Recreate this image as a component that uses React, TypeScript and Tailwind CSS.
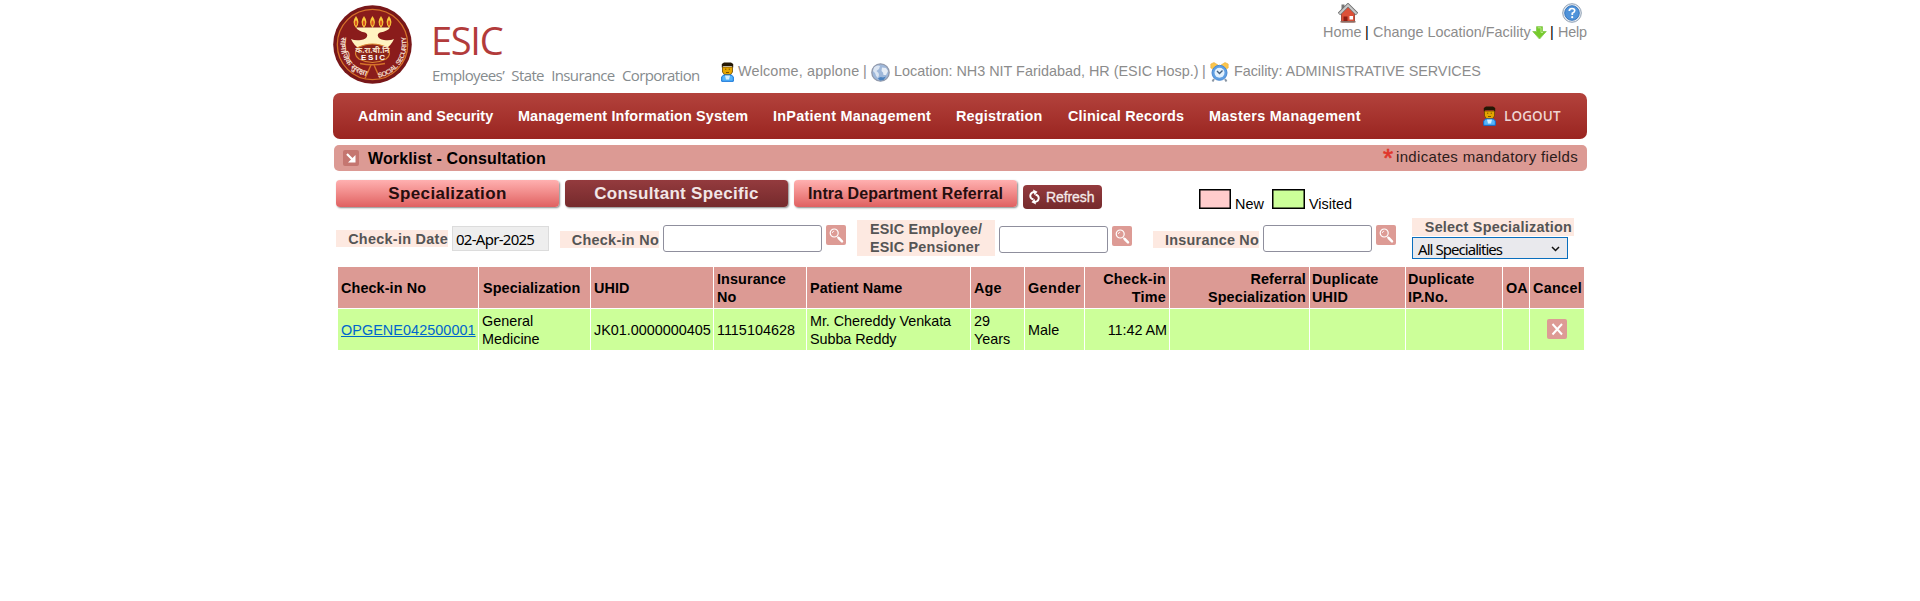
import React from "react";

function Emblem() {
  return (
    <svg className="h-[79px] w-[79px] shrink-0" viewBox="0 0 79 79">
      <defs>
        <path id="socialArc" d="M45.500 72.800 A34 34 0 0 0 73 33" />
        <path id="hindiArc" d="M8.500 32 A32 32 0 0 0 33.500 71" />
      </defs>
      <circle cx="39.500" cy="39.500" r="39.300" fill="#781719" />
      <circle cx="39.500" cy="39.500" r="35.200" fill="#8a1c1b" stroke="#d5722a" strokeWidth="1.300" />
      {[23, 31, 39.5, 48, 56].map((x) => (
        <g key={x}>
          <path d={`M${x} 11 q5 6.500 0 12 q-5 -5.500 0 -12`} fill="#f9c93c" />
          <ellipse cx={x} cy="18" rx="1.200" ry="2.800" fill="#d9541e" />
        </g>
      ))}
      <path d="M23 22.500 H57 Q55 26 47 27.500 Q44 29 45 31.500 Q46 34 51 35 Q57 36 61 34 Q58 41 52 44 H27 Q21 41 18 34 Q22 36 28 35 Q33 34 34 31.500 Q35 29 32 27.500 Q25 26 23 22.500Z" fill="#fff3c0" />
      <path d="M24 43 Q39.500 35 55 43 Q59 50 53 54 Q39.500 61 26 54 Q20 50 24 43Z" fill="#8b2418" stroke="#d98432" strokeWidth="1.200" />
      <text x="39.500" y="47.500" textAnchor="middle" fontSize="8" fontWeight="700" fill="#f4dfc6" fontFamily="Noto Sans, sans-serif">क.रा.बी.नि</text>
      <text x="28" y="55" fontSize="8" fontWeight="700" fill="#fff" textLength="24" fontFamily="Liberation Sans, sans-serif">ESIC</text>
      <path d="M27 58.500 Q39.500 61 52 58.500 M38 60 L32 73.500 M41 60 L47 73.500" stroke="#d5722a" strokeWidth="1.400" fill="none" />
      <text fontSize="7" fontWeight="700" fill="#efd6c4" fontFamily="Liberation Sans, sans-serif" letterSpacing="-0.600">
        <textPath href="#socialArc">SOCIAL SECURITY</textPath>
      </text>
      <text fontSize="8" fontWeight="700" fill="#efd6c4" fontFamily="Noto Sans, sans-serif">
        <textPath href="#hindiArc">सामाजिक सुरक्षा</textPath>
      </text>
    </svg>
  );
}

function UserIcon() {
  return (
    <svg className="h-5 w-[13px] shrink-0" viewBox="0 0 13 20">
      <path d="M1.500 5 V10 L3.500 12.700 H9.500 L11.500 10 V5Z" fill="#e5a500" stroke="#6b4700" strokeWidth=".8" />
      <path d="M.8 2 L3 .4 H10 L12.200 2 V5.500 L10.500 4 H2.500 L.8 5.500Z" fill="#231704" />
      <path d="M4 7.200 h1.300 M7.700 7.200 h1.300 M5 10.500 h3" stroke="#7a5200" strokeWidth="1" />
      <path d="M.7 19.300 V15 L2.500 13 H10.500 L12.300 15 V19.300Z" fill="#55b4fb" stroke="#0a6fd6" />
      <path d="M4 13.500 H9 L8 17.500 H5Z" fill="#d5efff" />
    </svg>
  );
}

function GlobeIcon() {
  return (
    <svg className="h-[19px] w-[19px] shrink-0" viewBox="0 0 19 19">
      <circle cx="9.500" cy="9.500" r="8.700" fill="#9fb8da" stroke="#9299aa" strokeWidth="1.300" />
      <path d="M3 4.500 Q6 1.500 9 3 L8 6 L5.500 8 L7.500 10 L8 12 L7 15 Q4.500 13 4 10 L2 8Z" fill="#dbe5f2" />
      <path d="M11 4.500 L15 5 L17 8 L15 12 L12.500 12 L12 9.500 L10.500 8Z" fill="#e6edf6" />
      <path d="M7 15.500 Q9 13 12 14.500 L15 13.500 L12.500 17 L9 17.500Z" fill="#4a82bf" />
    </svg>
  );
}

function ClockIcon() {
  return (
    <svg className="h-5 w-[19px] shrink-0" viewBox="0 0 19 20">
      <path d="M.8 6 V2 L4 .5 L8 3 L3 7Z M18.200 6 V2 L15 .5 L11 3 L16 7Z" fill="#fbc54c" stroke="#eeb13c" strokeWidth=".6" />
      <path d="M4 17 L2.500 19.500 M15 17 L16.500 19.500" stroke="#8b96a3" strokeWidth="2" />
      <circle cx="9.500" cy="10.800" r="7.500" fill="#5f9fe2" stroke="#4888d2" />
      <circle cx="9.500" cy="10.800" r="5" fill="#e3f1fd" />
      <path d="M7 9 L9.500 11.500 L12.500 8.500" stroke="#44617f" strokeWidth="1.400" fill="none" />
    </svg>
  );
}

function HouseIcon() {
  return (
    <svg className="h-5 w-5 shrink-0" viewBox="0 0 20 20">
      <rect x="3.500" y="1.500" width="3" height="7" fill="#777" />
      <path d="M3.500 10 L10 4 L16.500 10 V19 H3.500Z" fill="#dc5139" stroke="#8e3527" strokeWidth=".8" />
      <path d="M5.500 13.500 h4 V19 H5.500Z" fill="#8e1d13" />
      <rect x="11.500" y="13" width="3.500" height="3.500" fill="#fff" />
      <path d="M1 11 L10 2 L19 11" stroke="#6d6d6d" strokeWidth="3.400" fill="none" />
      <path d="M1.500 10.700 L10 2.200 L18.500 10.700" stroke="#c8c8c8" strokeWidth="2" fill="none" />
      <rect x="2.500" y="18" width="15" height="1.500" fill="#8e6f66" />
    </svg>
  );
}

function HelpIcon() {
  return (
    <svg className="h-5 w-5 shrink-0" viewBox="0 0 20 20">
      <circle cx="10" cy="10" r="9.300" fill="#e5eaf0" stroke="#8fa0b4" strokeWidth="1" />
      <circle cx="10" cy="10" r="7.300" fill="#4f93da" stroke="#2f6fb9" strokeWidth=".9" />
      <path d="M7.300 8 Q7.300 5.500 10 5.500 Q12.800 5.500 12.700 7.800 Q12.600 9.300 10.300 10.300 V12" stroke="#fff" strokeWidth="1.700" fill="none" />
      <circle cx="10.200" cy="14.200" r="1.100" fill="#fff" />
    </svg>
  );
}

function DownIcon() {
  return (
    <svg className="h-[14px] w-[15px] shrink-0" viewBox="0 0 15 14">
      <path d="M4.500 .7 H10.500 V5.500 H14.200 L7.500 13 L.8 5.500 H4.500Z" fill="#76cb2c" stroke="#8fce5c" strokeWidth="1" />
      <path d="M5.800 1.800 H9 V6.500 H11" stroke="#b7e88a" fill="none" />
    </svg>
  );
}

function SearchButton() {
  return (
    <button className="block h-5 w-5 shrink-0 rounded-[2px] bg-[#dd9b95]">
      <svg className="h-5 w-5" viewBox="0 0 20 20" fill="none">
        <circle cx="8.200" cy="8" r="4" stroke="#fff" strokeWidth="1.200" />
        <path d="M6.300 8 Q6.400 6.300 8.200 6.100" stroke="#fff" strokeWidth=".8" />
        <path d="M11.500 11.700 L12.500 12.700" stroke="#fff" strokeWidth="1.500" />
        <path d="M12.700 13 L16 16.300" stroke="#fff" strokeWidth="2.500" strokeLinecap="round" />
      </svg>
    </button>
  );
}

const label =
  "flex shrink-0 items-center justify-end whitespace-nowrap bg-[#fde9e1] text-[14.4px] font-bold leading-[18px] tracking-[0.3px] text-[#555]";
const field = "shrink-0 rounded-[3px] border border-[#8f8f9d] bg-white outline-none";
const th = "flex items-center bg-[#dc9a94] px-[3px] text-[14.4px] font-bold leading-[18px] tracking-[0.1px]";
const td = "flex items-center bg-[#ccff99] px-[3px] text-[14.4px] leading-[18px]";

export default function App() {
  return (
    <div className="h-[601px] w-full bg-white text-black [font-family:'Liberation_Sans',Arial,sans-serif]">
      <div className="ml-[333px] w-[1254px]">
        <header className="flex h-[93px] items-start text-[14.4px] text-[#8c8c8c]">
          <div className="flex w-[388px] pt-[5px]">
            <Emblem />
            <div className="ml-[19px] whitespace-nowrap pt-[9px] [font-family:'Open_Sans','Noto_Sans',sans-serif]">
              <div className="h-12 text-[38px] leading-[52px] tracking-[-1.3px] text-[#b23b3b]">ESIC</div>
              <div className="ml-px text-[15px] leading-[26px] tracking-[-0.62px] text-[#858b8e] [word-spacing:4px]">
                Employees’ State Insurance Corporation
              </div>
            </div>
          </div>
          <div className="flex w-[866px] flex-col">
            <div className="flex h-[62px] justify-end whitespace-nowrap leading-[16px]">
              <div className="flex w-[42px] flex-col pt-[3px]">
                <span className="ml-[15px] h-5"><HouseIcon /></span>
                <a className="mt-px">Home</a>
              </div>
              <span className="w-[8px] pt-6 text-black">|</span>
              <a className="w-[159px] pt-6">Change Location/Facility</a>
              <span className="w-[18px] pt-[26px]"><DownIcon /></span>
              <span className="w-[8px] pt-6 text-black">|</span>
              <div className="flex w-[29px] flex-col pt-[3px]">
                <span className="ml-[4px] h-5"><HelpIcon /></span>
                <a className="mt-px tracking-[-0.2px]">Help</a>
              </div>
            </div>
            <div className="flex h-5 items-center whitespace-nowrap leading-[20px]">
              <UserIcon />
              <span className="-mt-[3px] ml-1 w-[125px] tracking-[0.15px]">Welcome, applone</span>
              <span className="-mt-[3px] w-[8px]">|</span>
              <GlobeIcon />
              <span className="-mt-[3px] ml-1 w-[308px]">Location: NH3 NIT Faridabad, HR (ESIC Hosp.)</span>
              <span className="-mt-[3px] w-[8px]">|</span>
              <ClockIcon />
              <span className="-mt-[3px] ml-[5px] tracking-[-0.04px]">Facility: ADMINISTRATIVE SERVICES</span>
            </div>
          </div>
        </header>

        <nav className="flex h-[46px] items-center whitespace-nowrap rounded-[7px] bg-gradient-to-b from-[#b3423c] to-[#9a2420] pl-[25px] pt-px text-[14.4px] font-bold text-white">
          <a className="w-[160px]">Admin and Security</a>
          <a className="w-[255px] tracking-[0.13px]">Management Information System</a>
          <a className="w-[183px] tracking-[0.27px]">InPatient Management</a>
          <a className="w-[112px] tracking-[0.22px]">Registration</a>
          <a className="w-[141px] tracking-[0.22px]">Clinical Records</a>
          <a className="w-[274px] tracking-[0.3px]">Masters Management</a>
          <span className="-mt-[2px]"><UserIcon /></span>
          <a className="ml-2 text-[13.500px] font-semibold tracking-[0.1px] text-[#efd5d3] [font-family:'Open_Sans','Noto_Sans',sans-serif]">LOGOUT</a>
        </nav>

        <div className="ml-px mt-[6px] flex h-[26px] items-center rounded-[5px] bg-[#dc9a94] pl-[9px] pr-[9px]">
          <svg className="h-4 w-4" viewBox="0 0 16 16">
            <rect width="16" height="16" rx="2" fill="#c57670" />
            <path d="M4 4 L10 10" stroke="#fff" strokeWidth="2.200" />
            <path d="M12.500 5 V12.500 H5Z" fill="#fff" />
          </svg>
          <span className="ml-[9px] pt-[2px] text-base font-bold leading-6 tracking-[0.13px]">Worklist - Consultation</span>
          <span className="ml-auto flex pt-px text-[15px] leading-[22px] tracking-[0.33px] text-[#2c1c1b]">
            <b className="-mt-[2px] mr-px w-[12px] text-[26px] font-normal leading-[28px] text-[#e0352b] [-webkit-text-stroke:0.6px_#e0352b]">*</b>
            indicates mandatory fields
          </span>
        </div>

        <div className="ml-[3px] mt-[9px] flex h-[39px] items-start whitespace-nowrap">
          <button className="h-[27px] w-[223px] rounded-[4px] bg-gradient-to-b from-[#ffb0b0] to-[#df6061] text-[17px] font-bold leading-[26px] tracking-[0.35px] text-[#260e0e] shadow-[1px_1px_2px_#888]">Specialization</button>
          <button className="ml-[6px] h-[27px] w-[223px] rounded-[4px] bg-gradient-to-b from-[#943b3e] to-[#752a2c] text-[17px] font-bold leading-[26px] tracking-[0.3px] text-[#f2e6e6] shadow-[1px_1px_2px_#888]">Consultant Specific</button>
          <button className="ml-[6px] h-[27px] w-[223px] rounded-[4px] bg-gradient-to-b from-[#ffb0b0] to-[#df6061] text-[16px] font-bold leading-[25px] tracking-[0.08px] text-[#260e0e] shadow-[1px_1px_2px_#888]">Intra Department Referral</button>
          <button className="ml-[6px] mt-[5px] flex h-6 w-[79px] items-center rounded-[4px] bg-gradient-to-b from-[#943b3e] to-[#752a2c] pl-[6px] text-[14px] text-[#f5eaea]">
            <svg className="mr-[6px] h-4 w-[11px]" viewBox="0 0 11 16" fill="none" stroke="#fff" strokeWidth="1.900">
              <path d="M4.500 10.500 Q1 9.500 1.300 6.500 Q1.600 3.500 5 3" />
              <path d="M4 .5 L8.500 2.800 L5.500 6.200Z" fill="#fff" stroke="none" />
              <path d="M6.500 5.500 Q10 6.500 9.700 9.500 Q9.400 12.500 6 13" />
              <path d="M7 15.500 L2.500 13.200 L5.500 9.800Z" fill="#fff" stroke="none" />
            </svg>
            <span className="tracking-[-0.1px] [-webkit-text-stroke:0.3px_#f5eaea]">Refresh</span>
          </button>
          <div className="ml-[97px] mt-[9px] h-5 w-8 border border-black bg-[#ffcccc] shadow-[inset_0_0_0_0.5px_#000]" />
          <span className="ml-1 mt-[15px] w-[37px] text-[14.4px] leading-[18px]">New</span>
          <div className="mt-[9px] h-5 w-[33px] border border-black bg-[#ccff99] shadow-[inset_0_0_0_0.5px_#000]" />
          <span className="ml-1 mt-[15px] text-[14.4px] leading-[18px]">Visited</span>
        </div>

        <div className="ml-[3px] flex h-[48px] items-start">
          <div className={`${label} mt-[11px] h-[17px] w-[112px]`}>Check-in Date</div>
          <input readOnly value="02-Apr-2025" className="ml-1 mt-[7px] h-[25px] w-[97px] shrink-0 border border-[#dcdcdc] bg-[#eee] pl-[3px] text-[15px] tracking-[-0.72px] outline-none [font-family:'Noto_Sans',sans-serif]" />
          <div className={`${label} ml-[11px] mt-[12px] h-[17px] w-[99px]`}>Check-in No</div>
          <input className={`${field} ml-1 mt-[6px] h-[27px] w-[159px]`} />
          <span className="ml-1 mt-[6px]"><SearchButton /></span>
          <div className={`${label} ml-[11px] mt-px h-9 w-[138px] pr-[13px]`}>
            <span className="w-[112px] tracking-[0.18px]">ESIC Employee/<br />ESIC Pensioner</span>
          </div>
          <input className={`${field} ml-1 mt-[7px] h-[27px] w-[109px]`} />
          <span className="ml-1 mt-[7px]"><SearchButton /></span>
          <div className={`${label} ml-[21px] mt-[12px] h-[17px] w-[106px]`}><span className="tracking-[0.23px]">Insurance No</span></div>
          <input className={`${field} ml-1 mt-[6px] h-[27px] w-[109px]`} />
          <span className="ml-1 mt-[6px]"><SearchButton /></span>
          <div className="-mt-px ml-4 w-[162px]">
            <div className={`${label} h-[18px] pr-[2px]`}><span className="tracking-[0.23px]">Select Specialization</span></div>
            <div className="mt-px flex h-[22px] w-[156px] items-center justify-between border border-[#0a6ebd] bg-[#e9e9ed] pl-[5px] pr-[7px] pt-px text-[15px] leading-5 tracking-[-0.95px] [font-family:'Noto_Sans',sans-serif]">
              All Specialities
              <svg className="h-[6px] w-[9px]" viewBox="0 0 9 6"><path d="M1 1 L4.500 4.500 L8 1" stroke="#111" strokeWidth="1.500" fill="none" /></svg>
            </div>
          </div>
        </div>

        <div className="ml-[5px] grid w-[1246px] grid-cols-[140px_111px_122px_92px_163px_53px_59px_84px_139px_95px_96px_26px_54px] grid-rows-[41px_41px] gap-px">
          <div className={th}>Check-in No</div>
          <div className={`${th} pl-[4px]`}>Specialization</div>
          <div className={th}>UHID</div>
          <div className={th}>Insurance<br />No</div>
          <div className={th}>Patient Name</div>
          <div className={th}>Age</div>
          <div className={th}><span className="tracking-[0.4px]">Gender</span></div>
          <div className={`${th} justify-end text-right`}><span className="tracking-[0.25px]">Check-in<br />Time</span></div>
          <div className={`${th} justify-end text-right`}><span className="tracking-[0.15px]">Referral<br />Specialization</span></div>
          <div className={th}><span className="-ml-px tracking-[0.2px]">Duplicate<br />UHID</span></div>
          <div className={th}><span className="-ml-px tracking-[0.2px]">Duplicate<br />IP.No.</span></div>
          <div className={th}>OA</div>
          <div className={th}><span className="tracking-[0.3px]">Cancel</span></div>
          <div className={td}><a className="tracking-[0.07px] text-[#0066cc] underline">OPGENE042500001</a></div>
          <div className={td}>General<br />Medicine</div>
          <div className={td}>JK01.0000000405</div>
          <div className={td}>1115104628</div>
          <div className={td}><span className="tracking-[-0.07px]">Mr. Chereddy Venkata<br />Subba Reddy</span></div>
          <div className={td}>29<br />Years</div>
          <div className={td}>Male</div>
          <div className={`${td} justify-end`}><span className="-mr-px tracking-[-0.05px]">11:42 AM</span></div>
          <div className={td} />
          <div className={td} />
          <div className={td} />
          <div className={td} />
          <div className={`${td} justify-center pb-px`}>
            <svg className="h-5 w-5" viewBox="0 0 20 20">
              <rect width="20" height="20" rx="2" fill="#dd9b95" />
              <path d="M5.500 5 L15 15.500 M15 5 L5.500 15.500" stroke="#fff" strokeWidth="2" />
            </svg>
          </div>
        </div>
      </div>
    </div>
  );
}
